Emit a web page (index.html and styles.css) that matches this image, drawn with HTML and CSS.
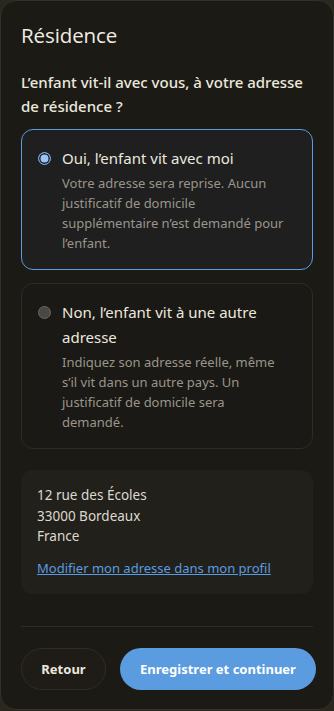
FILE: index.html
```html
<!DOCTYPE html>
<html lang="fr">
<head>
<meta charset="utf-8">
<link rel="stylesheet" href="styles.css">
</head>
<body>
<div class="card">
  <h1 class="title">Résidence</h1>
  <p class="question">L’enfant vit-il avec vous, à votre adresse de résidence ?</p>
  <div class="options">
    <label class="option selected">
      <span class="radio checked"></span>
      <span class="opt-text">
        <span class="opt-label">Oui, l’enfant vit avec moi</span>
        <span class="opt-desc">Votre adresse sera reprise. Aucun justificatif de domicile supplémentaire n’est demandé pour l’enfant.</span>
      </span>
    </label>
    <label class="option">
      <span class="radio"></span>
      <span class="opt-text">
        <span class="opt-label">Non, l’enfant vit à une autre adresse</span>
        <span class="opt-desc">Indiquez son adresse réelle, même s’il vit dans un autre pays. Un justificatif de domicile sera demandé.</span>
      </span>
    </label>
  </div>
  <div class="address">
    <div class="addr-lines">
      <span>12 rue des Écoles</span>
      <span>33000 Bordeaux</span>
      <span>France</span>
    </div>
    <a class="addr-link" href="#">Modifier mon adresse dans mon profil</a>
  </div>
  <div class="footer">
    <button class="btn btn-back">Retour</button>
    <button class="btn btn-primary">Enregistrer et continuer</button>
  </div>
</div>
</body>
</html>
```
FILE: styles.css
```css
html, body {
  margin: 0;
  padding: 0;
  background: #2a271f;
}
body {
  font-family: "Noto Sans", "Liberation Sans", sans-serif;
  color: #ece8df;
}
.card {
  box-sizing: border-box;
  width: 334px;
  height: 710px;
  background: #1c1a15;
  border: 1px solid #353128;
  border-radius: 16px;
  padding: 21px 20px 0 20px;
  display: flex;
  flex-direction: column;
}
.title {
  margin: 0;
  font-family: "Open Sans", "Noto Sans", sans-serif;
  font-weight: 400;
  font-size: 20.5px;
  line-height: 26px;
  color: #f0ece4;
  letter-spacing: -0.1px;
}
.question {
  margin: 22px 0 0 0;
  font-size: 15px;
  line-height: 24px;
  color: #ece8df;
  font-weight: 500;
}
.options {
  margin-top: 11px;
  display: flex;
  flex-direction: column;
  gap: 13px;
}
.option {
  display: flex;
  gap: 11px;
  padding: 16px 26px 16px 16px;
  border: 1px solid #2f2c25;
  border-radius: 12px;
  background: #1b1915;
}
.option.selected {
  border-color: #5b9be0;
  background: #1f1f1f;
}
.radio {
  flex: none;
  box-sizing: border-box;
  width: 13px;
  height: 13px;
  margin-top: 6px;
  border-radius: 50%;
  background: #4a4845;
  border: 1px solid #6a6761;
}
.radio.checked {
  background: #9cc3f5;
  border: 1px solid #6fa8ea;
  box-shadow: inset 0 0 0 1.5px #1f1f1f;
}
.opt-text {
  display: flex;
  flex-direction: column;
}
.opt-label {
  font-size: 15px;
  line-height: 25px;
  color: #ece8df;
}
.opt-desc {
  margin-top: 2px;
  font-size: 13px;
  line-height: 20px;
  color: #9a958b;
}
.address {
  margin-top: 21px;
  background: #22201b;
  border-radius: 12px;
  padding: 15px 16px 16px 16px;
}
.addr-lines {
  display: flex;
  flex-direction: column;
  font-size: 13.5px;
  line-height: 20.5px;
  color: #ddd9d0;
}
.addr-link {
  display: inline-block;
  margin-top: 11px;
  font-size: 13px;
  line-height: 20px;
  color: #5b9be0;
  text-decoration: underline;
}
.footer {
  margin-top: 32px;
  border-top: 1px solid #2f2c25;
  padding-top: 21px;
  display: flex;
  gap: 14px;
}
.btn {
  height: 42px;
  border-radius: 21px;
  font-family: "Noto Sans", sans-serif;
  font-weight: 700;
  font-size: 13px;
  cursor: pointer;
}
.btn-back {
  width: 85px;
  background: #1f1c17;
  border: 1px solid #2f2c25;
  color: #ece8df;
}
.btn-primary {
  width: 196px;
  margin-right: -3px;
  background: #5b9be0;
  border: none;
  color: #ffffff;
}
```
